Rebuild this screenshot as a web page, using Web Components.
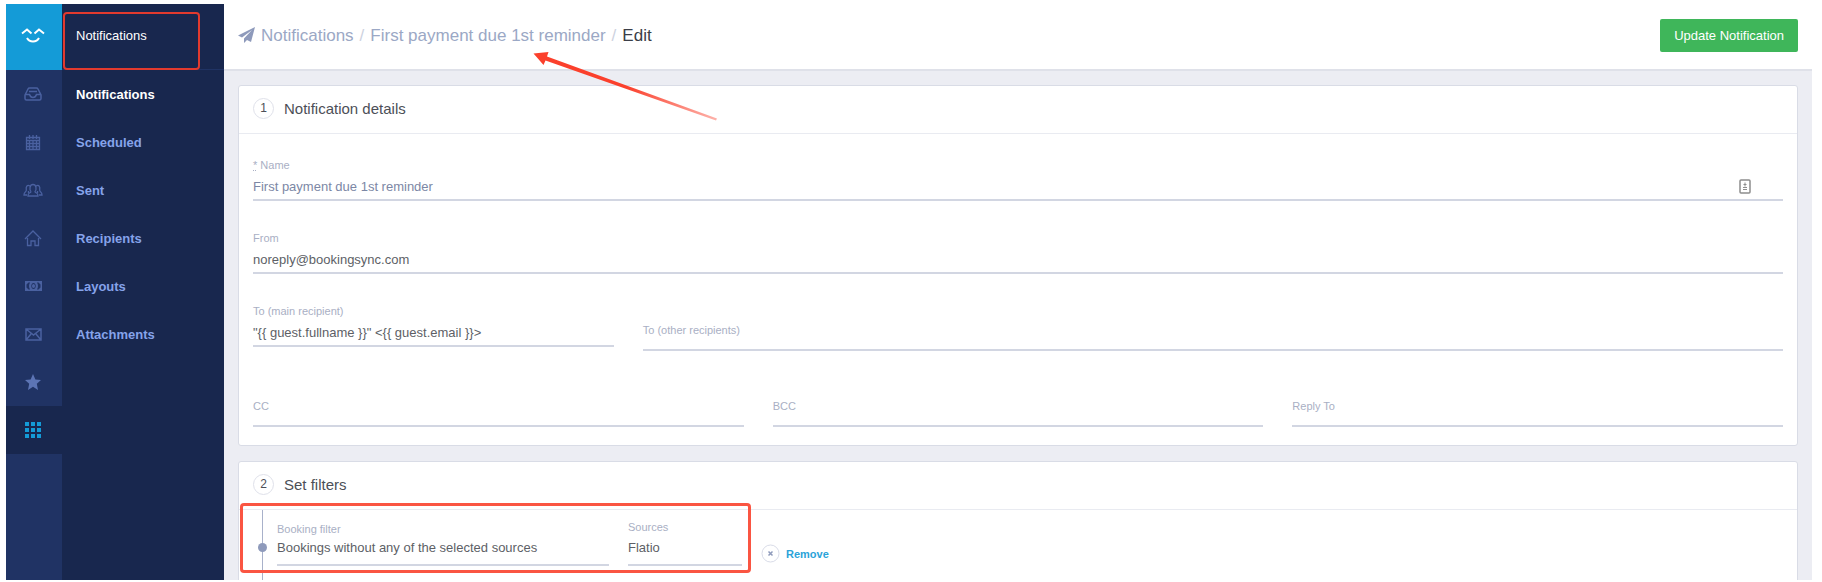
<!DOCTYPE html>
<html lang="en">

	<head>
		<meta charset="UTF-8">
		<title>Edit Notification</title>
		<style>
			body {
				margin: 0;
				background: #fff;
				font-family: "Liberation Sans", Arial, sans-serif;
				font-size: 13px;
			}
		</style>
	</head>

	<body>
		<notification-app></notification-app>

		<template id="app-tpl">
			<style>
				:host {
					display: grid;
					grid-template-columns: 56px 162px 1fr;
					box-sizing: border-box;
					height: calc(100vh - 6px);
					margin: 4px 10px 2px 6px;
					overflow: hidden;
					background: #ecedf3;
				}
				main {
					min-width: 0;
				}
				.panels {
					display: flex;
					flex-direction: column;
					gap: 15px;
					padding: 14px 14px 0;
				}
				.grid {
					display: grid;
					grid-template-columns: repeat(12, 1fr);
					column-gap: 29px;
					padding: 23px 14px 18px;
				}
				.full { grid-column: span 12; margin-bottom: 29px; }
				.main { grid-column: span 3; }
				.other { grid-column: span 9; margin-top: 19px; }
				.third { grid-column: span 4; margin-top: 47px; }
			</style>
			<icon-rail></icon-rail>
			<side-menu heading="Notifications">
				<side-link active>Notifications</side-link>
				<side-link>Scheduled</side-link>
				<side-link>Sent</side-link>
				<side-link>Recipients</side-link>
				<side-link>Layouts</side-link>
				<side-link>Attachments</side-link>
			</side-menu>
			<main>
				<page-header></page-header>
				<div class="panels">
					<step-panel step="1" heading="Notification details">
						<div class="grid">
							<text-field class="full" label="Name" value="First payment due 1st reminder" required></text-field>
							<text-field class="full" label="From" value="noreply@bookingsync.com"></text-field>
							<text-field class="main" label="To (main recipient)" value='"{{ guest.fullname }}" &lt;{{ guest.email }}&gt;'></text-field>
							<text-field class="other" label="To (other recipients)" empty></text-field>
							<text-field class="third" label="CC" empty></text-field>
							<text-field class="third" label="BCC" empty></text-field>
							<text-field class="third" label="Reply To" empty></text-field>
						</div>
					</step-panel>
					<step-panel step="2" heading="Set filters">
						<filter-row></filter-row>
					</step-panel>
				</div>
			</main>
			<arrow-mark></arrow-mark>
		</template>

		<template id="rail-tpl">
			<style>
				:host {
					display: block;
					background: #203364;
				}
				a {
					display: flex;
					align-items: center;
					justify-content: center;
					box-sizing: border-box;
					height: 48px;
					padding-right: 2px;
					color: #4a61a0;
				}
				a.brand {
					height: 66px;
					background: #149bd7;
					color: #fff;
				}
				a.active {
					background: #18274e;
					color: #149bd7;
				}
				svg {
					fill: none;
					stroke: currentColor;
				}
				.solid {
					fill: currentColor;
					stroke: none;
				}
			</style>
			<nav>
				<a class="brand" href="#" aria-label="Home">
					<svg width="24" height="20" viewBox="0 0 24 20" stroke-width="2"><path d="M1 6.500 6 2.500l4.500 4M13.500 6.500l4.500-4 5 4M6 11c2.500 4.500 9.500 4.500 12 0"/></svg>
				</a>
				<a href="#" aria-label="Inbox">
					<svg width="18" height="14" viewBox="0 0 18 14" stroke-width="1.500"><path d="M1 8 4 2q.5-1 1.500-1h7q1 0 1.500 1l3 6v3.500q0 1.500-1.500 1.500h-13Q1 13 1 11.500zM1 7.500h4.500q1 3 3.500 3t3.500-3H17M5 4.500h8"/></svg>
				</a>
				<a href="#" aria-label="Calendar">
					<svg width="16" height="17" viewBox="0 0 16 17" stroke-width="1.300"><path d="M1.500 3.500h13v12h-13zM1.500 6.500h13M1.500 9.500h13M1.500 12.500h13M4.500 6v9.500M8 6v9.500M11.500 6v9.500M4.500 1v4M8 1v4M11.500 1v4"/></svg>
				</a>
				<a href="#" aria-label="Clients">
					<svg width="20" height="14" viewBox="0 0 20 14" stroke-width="1.300"><path d="M8 8.500C6.300 7 6.500 1.500 10 1.500S13.700 7 12 8.500q0 1 1.500 1.500 1.500.5 1.500 3H5q0-2.500 1.500-3T8 8.500M7 3C4 1 2.800 4 3.300 6.500q.3 1.500-1 2.500T1 12H4M5.500 10V8M13 3c3-2 4.200 1 3.700 3.500q-.3 1.500 1 2.500T19 12H16M14.500 10V8"/></svg>
				</a>
				<a href="#" aria-label="Rentals">
					<svg width="18" height="17" viewBox="0 0 18 17" stroke-width="1.300"><path d="M1 9 9 1l8 8M3.500 8v7.500H7V11h4v4.500h3.500V8"/></svg>
				</a>
				<a href="#" aria-label="Payments">
					<svg class="solid" width="17" height="10" viewBox="0 0 17 10"><path fill-rule="evenodd" d="M0 0h17v10H0zM1.500 3.500v3l2 2h1.500Q3 5 5 1.500H3.500zM15.500 3.500v3l-2 2H12Q14 5 12 1.500h1.500zM8.500 2C5.500 2 5.500 8 8.500 8S11.500 2 8.500 2M8.500 3c2 0 2 4 0 4s-2-4 0-4"/></svg>
				</a>
				<a href="#" aria-label="Inbox messages">
					<svg width="17" height="13" viewBox="0 0 17 13" stroke-width="1.500"><path d="M1 1h15v11H1zM1 1l7.500 6L16 1M1 12l5-6M16 12l-5-6"/></svg>
				</a>
				<a href="#" aria-label="Reviews">
					<svg class="solid" style="color: #5c74b4" width="16" height="16" viewBox="0 0 16 16"><path d="m8 0 2.400 5.400 5.600.5-4.200 3.900L13 16l-5-3.300L3 16l1.200-6.200L0 5.900l5.600-.5z"/></svg>
				</a>
				<a class="active" href="#" aria-label="Apps">
					<svg class="solid" width="16" height="16" viewBox="0 0 16 16"><path d="M0 0h4v4H0zM6 0h4v4H6zM12 0h4v4h-4zM0 6h4v4H0zM6 6h4v4H6zM12 6h4v4h-4zM0 12h4v4H0zM6 12h4v4H6zM12 12h4v4h-4z"/></svg>
				</a>
			</nav>
		</template>

		<template id="menu-tpl">
			<style>
				:host {
					display: block;
					background: #18274e;
				}
				header {
					position: relative;
					display: flex;
					align-items: center;
					box-sizing: border-box;
					height: 66px;
					padding: 0 14px 3px;
					border-bottom: 1px solid #203364;
					color: #fff;
				}
				/* highlight drawn over the menu heading */
				header::after {
					content: "";
					position: absolute;
					inset: 8px 24px -1px 1px;
					border: 2px solid #e23a2e;
					border-radius: 4px;
				}
			</style>
			<header></header>
			<nav><slot></slot></nav>
		</template>

		<template id="link-tpl">
			<style>
				:host {
					display: block;
				}
				a {
					display: flex;
					align-items: center;
					height: 48px;
					padding: 0 14px;
					color: #86a3ea;
					font-weight: bold;
					text-decoration: none;
				}
				:host([active]) a {
					color: #fff;
				}
			</style>
			<a href="#"><slot></slot></a>
		</template>

		<template id="header-tpl">
			<style>
				:host {
					display: flex;
					align-items: center;
					justify-content: space-between;
					box-sizing: border-box;
					height: 67px;
					padding: 0 14px 2px;
					background: #fff;
					border-bottom: 2px solid #dfe1e9;
				}
				nav {
					display: flex;
					align-items: center;
					gap: 6px;
					color: #cdd2e0;
					font-size: 17px;
				}
				svg {
					fill: #8e9abb;
				}
				a {
					color: #9ba8c5;
					text-decoration: none;
				}
				b {
					color: #3b3e48;
					font-weight: normal;
				}
				button {
					height: 33px;
					padding: 0 14px;
					border: 0;
					border-radius: 2px;
					background: #3fb65a;
					color: #fff;
					font: inherit;
					cursor: pointer;
				}
			</style>
			<nav aria-label="Breadcrumb">
				<svg width="17" height="17" viewBox="0 0 17 17"><path d="M17 0 0 8.500l4 2L14 3 6 11.500V16l3-3 4 2z"/></svg>
				<a href="#">Notifications</a>
				<span>/</span>
				<a href="#">First payment due 1st reminder</a>
				<span>/</span>
				<b>Edit</b>
			</nav>
			<button type="button">Update Notification</button>
		</template>

		<template id="panel-tpl">
			<style>
				:host {
					display: block;
					background: #fff;
					border: 1px solid #d9dce6;
					border-radius: 3px;
				}
				header {
					display: flex;
					align-items: center;
					gap: 10px;
					box-sizing: border-box;
					height: 48px;
					padding: 0 14px 3px;
					border-bottom: 1px solid #e9ebf1;
				}
				span {
					box-sizing: border-box;
					width: 21px;
					height: 21px;
					border: 1px solid #dfe1ea;
					border-radius: 50%;
					color: #4c4f57;
					font-size: 12px;
					line-height: 19px;
					text-align: center;
				}
				h2 {
					margin: 0;
					color: #4c4f57;
					font-size: 15px;
					font-weight: normal;
				}
			</style>
			<header><span></span><h2></h2></header>
			<slot></slot>
		</template>

		<template id="field-tpl">
			<style>
				:host {
					display: flex;
					flex-direction: column;
					min-width: 0;
				}
				label {
					color: #a9afc4;
					font-size: 11px;
					line-height: 16px;
				}
				abbr {
					text-decoration: underline dotted;
				}
				.box {
					display: flex;
					align-items: center;
					padding-right: 32px;
					border-bottom: 2px solid #d2d6e2;
				}
				input {
					flex: 1;
					box-sizing: border-box;
					min-width: 0;
					height: 26px;
					padding: 0;
					border: 0;
					outline: 0;
					background: none;
					color: #5d5f66;
					font: inherit;
				}
				svg {
					display: none;
				}
				:host([required]) svg {
					display: block;
				}
				:host([required]) input {
					color: #7c87a5;
				}
				:host([empty]) input {
					height: 11px;
				}
			</style>
			<label for="input"></label>
			<div class="box">
				<input id="input" type="text">
				<svg width="12" height="15" viewBox="0 0 12 15" fill="none" stroke="#8d8d8d"><rect x="1" y="1" width="10" height="13" rx="1" stroke-width="1.500"/><path d="M6 3.500v4M4.500 5.500h3M4 8.500h4M4 10.500h4"/></svg>
			</div>
		</template>

		<template id="filter-tpl">
			<style>
				:host {
					position: relative;
					display: flex;
					align-items: flex-start;
					min-height: 120px;
					padding-left: 14px;
				}
				.track {
					display: flex;
					justify-content: center;
					align-self: stretch;
					box-sizing: border-box;
					width: 18px;
					padding-top: 33px;
					background: linear-gradient(#a8b1ca, #a8b1ca) center / 1px 100% no-repeat;
				}
				.track i {
					width: 9px;
					height: 9px;
					border-radius: 50%;
					background: #8e9abb;
				}
				.field {
					display: flex;
					flex-direction: column;
					border-bottom: 2px solid #d2d6e2;
				}
				.filter {
					width: 332px;
					margin: 11px 19px 0 6px;
				}
				.source {
					width: 114px;
					margin: 9px 19px 0 0;
				}
				label {
					color: #a9afc4;
					font-size: 11px;
					line-height: 16px;
				}
				select {
					appearance: none;
					height: 27px;
					padding: 0 0 6px;
					border: 0;
					outline: 0;
					background: none;
					color: #5d5f66;
					font: inherit;
				}
				.source select {
					height: 29px;
					padding-bottom: 4px;
				}
				button {
					display: flex;
					align-items: center;
					gap: 6px;
					margin-top: 34px;
					padding: 0;
					border: 0;
					background: none;
					color: #2ba3d9;
					font: bold 11px "Liberation Sans", Arial, sans-serif;
					cursor: pointer;
				}
				/* highlight drawn over the filter */
				.mark {
					position: absolute;
					inset: -7px auto auto 1px;
					box-sizing: border-box;
					width: 511px;
					height: 70px;
					border: 3px solid #fa5542;
					border-radius: 4px;
					pointer-events: none;
				}
			</style>
			<div class="track"><i></i></div>
			<div class="field filter">
				<label for="filter">Booking filter</label>
				<select id="filter"><option>Bookings without any of the selected sources</option></select>
			</div>
			<div class="field source">
				<label for="source">Sources</label>
				<select id="source"><option>Flatio</option></select>
			</div>
			<button type="button">
				<svg width="19" height="19" viewBox="0 0 19 19" fill="none"><circle cx="9.500" cy="9.500" r="8.500" stroke="#d9dce8"/><path d="m7.500 7.500 4 4m0-4-4 4" stroke="#8e9abb" stroke-width="1.500"/></svg>
				Remove
			</button>
			<div class="mark"></div>
		</template>

		<template id="arrow-tpl">
			<style>
				:host {
					position: absolute;
					top: 50px;
					left: 530px;
					pointer-events: none;
				}
				svg {
					display: block;
				}
			</style>
			<svg width="190" height="72" viewBox="0 0 190 72">
				<defs>
					<linearGradient id="fade" gradientUnits="userSpaceOnUse" x1="4" y1="4" x2="187" y2="69">
						<stop offset="0" stop-color="#fb402c"/>
						<stop offset=".5" stop-color="#fb402c"/>
						<stop offset="1" stop-color="#fb402c" stop-opacity=".4"/>
					</linearGradient>
				</defs>
				<path fill="url(#fade)" d="M3.500 3.500 18.500 2 17 6.500 187 68.500l-1 2L15.500 10.500 13.500 15z"/>
			</svg>
		</template>
	</body>
	<script>

		class TemplateElement extends HTMLElement {
			constructor() {
				super()
				const template = document.getElementById(this.constructor.template);
				this.attachShadow({ mode: 'open' }).appendChild(template.content.cloneNode(true));
			}

			find(selector) {
				return this.shadowRoot.querySelector(selector);
			}
		}

		class IconRail extends TemplateElement {
			static template = 'rail-tpl';
		}

		class SideMenu extends TemplateElement {
			static template = 'menu-tpl';

			connectedCallback() {
				this.find('header').textContent = this.getAttribute('heading');
			}
		}

		class SideLink extends TemplateElement {
			static template = 'link-tpl';
		}

		class PageHeader extends TemplateElement {
			static template = 'header-tpl';
		}

		class StepPanel extends TemplateElement {
			static template = 'panel-tpl';

			connectedCallback() {
				this.find('span').textContent = this.getAttribute('step');
				this.find('h2').textContent = this.getAttribute('heading');
			}
		}

		class TextField extends TemplateElement {
			static template = 'field-tpl';

			connectedCallback() {
				const label = this.find('label');
				label.textContent = this.getAttribute('label');
				if (this.hasAttribute('required')) {
					const mark = document.createElement('abbr');
					mark.title = 'required';
					mark.textContent = '*';
					label.prepend(mark, ' ');
				}
				this.find('input').value = this.getAttribute('value') || '';
			}
		}

		class FilterRow extends TemplateElement {
			static template = 'filter-tpl';

			connectedCallback() {
				this.find('button').addEventListener('click', () => {
					this.dispatchEvent(new CustomEvent('remove', { bubbles: true }));
				});
			}
		}

		class ArrowMark extends TemplateElement {
			static template = 'arrow-tpl';
		}

		class NotificationApp extends TemplateElement {
			static template = 'app-tpl';
		}

		window.customElements.define('icon-rail', IconRail)
		window.customElements.define('side-menu', SideMenu)
		window.customElements.define('side-link', SideLink)
		window.customElements.define('page-header', PageHeader)
		window.customElements.define('step-panel', StepPanel)
		window.customElements.define('text-field', TextField)
		window.customElements.define('filter-row', FilterRow)
		window.customElements.define('arrow-mark', ArrowMark)
		window.customElements.define('notification-app', NotificationApp)
	</script>

</html>
